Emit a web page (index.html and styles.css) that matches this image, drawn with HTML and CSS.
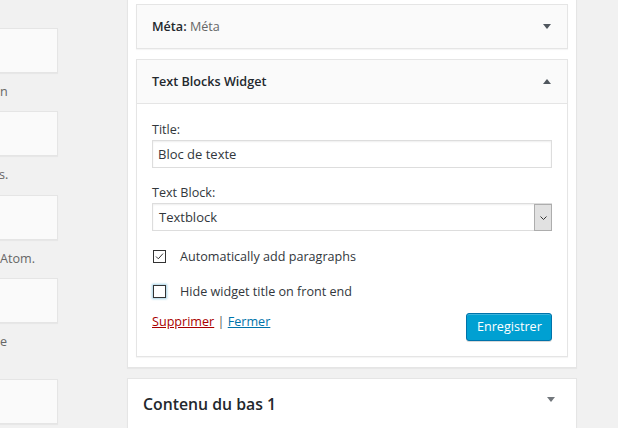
FILE: index.html
```html
<!DOCTYPE html>
<html lang="fr">
<head>
<meta charset="utf-8">
<title>Widgets</title>
<link rel="stylesheet" href="styles.css">
</head>
<body>
<div class="page">
  <div class="available">
    <div class="avail-item">
      <div class="avail-box"></div>
      <p class="avail-desc">n</p>
    </div>
    <div class="avail-item">
      <div class="avail-box"></div>
      <p class="avail-desc avail-desc-cut">s.</p>
    </div>
    <div class="avail-item">
      <div class="avail-box"></div>
      <p class="avail-desc">Atom.</p>
    </div>
    <div class="avail-item avail-item-tall">
      <div class="avail-box"></div>
      <p class="avail-desc">e</p>
    </div>
    <div class="avail-item">
      <div class="avail-box"></div>
    </div>
  </div>

  <div class="sidebars">
    <div class="holder holder-open">
      <div class="widget">
        <div class="widget-top">
          <h3 class="widget-title">Méta:<span class="in-title"> Méta</span></h3>
          <span class="arrow arrow-down"></span>
        </div>
      </div>

      <div class="widget widget-open">
        <div class="widget-top">
          <h3 class="widget-title">Text Blocks Widget</h3>
          <span class="arrow arrow-up"></span>
        </div>
        <div class="widget-inside">
          <div class="field field-first">
            <label class="field-label">Title:</label>
            <input class="text-input" type="text" value="Bloc de texte">
          </div>
          <div class="field">
            <label class="field-label">Text Block:</label>
            <div class="select">
              <span class="select-value">Textblock</span>
              <span class="select-btn">
                <svg width="7" height="4" viewBox="0 0 7 4"><polyline points="0.5,0.5 3.5,3.5 6.5,0.5" fill="none" stroke="#333" stroke-width="1"/></svg>
              </span>
            </div>
          </div>
          <div class="check-row check-row-first">
            <span class="checkbox">
              <svg width="11" height="11" viewBox="0 0 11 11"><polyline points="2,5.5 4.3,7.8 9,2.6" fill="none" stroke="#333" stroke-width="1"/></svg>
            </span>
            <span class="check-label">Automatically add paragraphs</span>
          </div>
          <div class="check-row">
            <span class="checkbox checkbox-focus"></span>
            <span class="check-label">Hide widget title on front end</span>
          </div>
          <div class="control-actions">
            <div class="links"><a class="link-delete" href="#">Supprimer</a> <span class="sep">|</span> <a class="link-close" href="#">Fermer</a></div>
            <button class="button-primary" type="button">Enregistrer</button>
          </div>
        </div>
      </div>
    </div>

    <div class="holder holder-closed">
      <div class="sidebar-name">
        <h2 class="sidebar-title">Contenu du bas 1</h2>
        <span class="arrow arrow-down arrow-light"></span>
      </div>
    </div>
  </div>
</div>
</body>
</html>
```

FILE: styles.css
```css
* {
  box-sizing: border-box;
}

html,
body {
  margin: 0;
  padding: 0;
}

body {
  width: 618px;
  height: 428px;
  overflow: hidden;
  background: #f1f1f1;
  font-family: "Open Sans", "Noto Sans", sans-serif;
  font-size: 12.6px;
  color: #32373c;
}

.page {
  display: flex;
  align-items: flex-start;
}

/* Available widgets column (cut off at the left) */
.available {
  width: 208px;
  margin-left: -150px;
  margin-right: 69px;
  padding-top: 28px;
  flex: none;
}

.avail-item {
  margin-bottom: 10.3px;
}

.avail-item-tall {
  margin-bottom: 28.3px;
}

.avail-box {
  height: 45px;
  background: #fafafa;
  border: 1px solid #e5e5e5;
  box-shadow: 0 1px 1px rgba(0, 0, 0, 0.04);
}

.avail-desc {
  margin: 10px 0 0;
  padding-left: 150px;
  line-height: 18px;
  color: #666;
  white-space: nowrap;
}

.avail-desc-cut {
  padding-left: 149px;
}

/* Sidebars column */
.sidebars {
  width: 450px;
  flex: none;
  display: flex;
  flex-direction: column;
  gap: 10px;
}

.holder {
  background: #fff;
  border: 1px solid #e5e5e5;
  box-shadow: 0 1px 1px rgba(0, 0, 0, 0.04);
}

.holder-open {
  margin-top: -1px;
  padding: 4px 8px 10px;
  display: flex;
  flex-direction: column;
  gap: 10px;
}

.widget {
  background: #fafafa;
  border: 1px solid #e5e5e5;
  box-shadow: 0 1px 1px rgba(0, 0, 0, 0.04);
}

.widget-top {
  height: 43px;
  display: flex;
  align-items: center;
  justify-content: space-between;
  padding: 0 16px 0 15px;
}

.widget-title {
  margin: 0;
  font-size: 12.6px;
  line-height: 18px;
  font-weight: 600;
  color: #23282d;
}

.in-title {
  font-weight: 400;
  color: #666;
}

.arrow {
  width: 0;
  height: 0;
  border-left: 4.5px solid transparent;
  border-right: 4.5px solid transparent;
}

.arrow-down {
  border-top: 5.5px solid #50575e;
}

.arrow-up {
  border-bottom: 5.5px solid #50575e;
}

.arrow-light {
  border-top-color: #72777c;
}

.widget-inside {
  background: #fff;
  border-top: 1px solid #e5e5e5;
  padding: 17px 15px 15px;
}

.field + .field {
  margin-top: 16px;
}

.field-label {
  display: block;
  line-height: 18px;
  margin-bottom: 1px;
  color: #32373c;
}

.text-input {
  display: block;
  width: 100%;
  height: 28px;
  margin: 0;
  padding: 0 5px;
  border: 1px solid #ddd;
  box-shadow: inset 0 1px 2px rgba(0, 0, 0, 0.07);
  background: #fff;
  font-family: "Open Sans", "Noto Sans", sans-serif;
  font-size: 13px;
  color: #32373c;
  outline: none;
}

.select {
  display: flex;
  align-items: stretch;
  height: 28px;
  border: 1px solid #ddd;
  box-shadow: inset 0 1px 2px rgba(0, 0, 0, 0.07);
  background: #fff;
}

.select-value {
  flex: 1;
  display: flex;
  align-items: center;
  padding-left: 6px;
  font-size: 13px;
  color: #32373c;
}

.select-btn {
  width: 18px;
  margin: 0 -1px -1px 0;
  display: flex;
  align-items: center;
  justify-content: center;
  background: #e1e1e1;
  border: 1px solid #adadad;
}

.check-row {
  display: flex;
  align-items: center;
  height: 18px;
  margin-top: 17px;
}

.check-row-first {
  margin-top: 16px;
}

.checkbox {
  width: 13px;
  height: 13px;
  margin-left: 1px;
  margin-right: 14px;
  border: 1px solid #333;
  background: #fff;
  display: flex;
  align-items: center;
  justify-content: center;
  flex: none;
}

.checkbox-focus {
  box-shadow: 0 0 2px 1px rgba(30, 140, 190, 0.4);
}

.check-label {
  color: #32373c;
}

.control-actions {
  margin-top: 13px;
  display: flex;
  align-items: flex-start;
  justify-content: space-between;
}

.links {
  line-height: 18px;
}

.link-delete {
  color: #a00;
  text-decoration: underline;
}

.sep {
  color: #555;
}

.link-close {
  color: #0073aa;
  text-decoration: underline;
}

.button-primary {
  width: 86px;
  height: 28px;
  margin: 0;
  padding: 0 10px 1px;
  background: #00a0d2;
  border: 1px solid #0073aa;
  border-radius: 3px;
  box-shadow: inset 0 1px 0 rgba(120, 200, 230, 0.5), 0 1px 0 rgba(0, 0, 0, 0.15);
  color: #fff;
  font-family: "Open Sans", "Noto Sans", sans-serif;
  font-size: 12.6px;
  line-height: 26px;
}

.holder-closed {
  height: 60px;
}

.sidebar-name {
  display: flex;
  align-items: flex-start;
  justify-content: space-between;
  padding: 14px 21px 0 15px;
}

.sidebar-title {
  margin: 0;
  font-size: 15.8px;
  font-weight: 600;
  line-height: 22px;
  color: #23282d;
}

.sidebar-name .arrow {
  margin-top: 4px;
}
```
